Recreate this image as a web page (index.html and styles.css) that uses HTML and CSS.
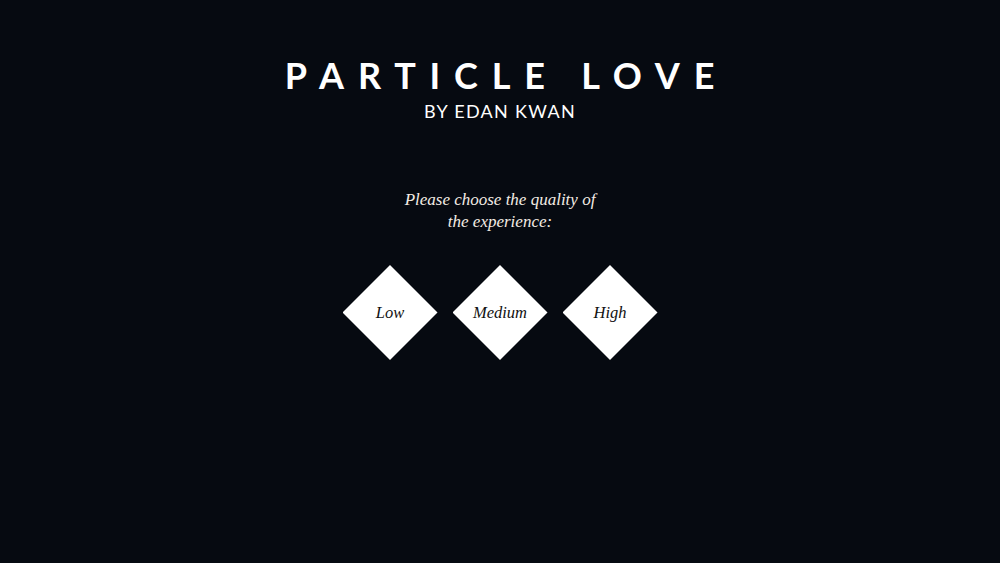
FILE: index.html
```html
<!DOCTYPE html>
<html lang="en">
<head>
    <meta charset="UTF-8">
    <title>Particle Love</title>
    <link rel="stylesheet" href="styles.css">
</head>
<body>
<div class="page">
    <div class="header">
        <h1 class="title">PARTICLE LOVE</h1>
        <div class="author">BY EDAN KWAN</div>
    </div>
    <p class="question">Please choose the quality of<br/>the experience:</p>
    <div class="choices">
        <div class="choice">Low</div>
        <div class="choice">Medium</div>
        <div class="choice">High</div>
    </div>
</div>
</body>
</html>
```

FILE: styles.css
```css
html,body{
    margin: 0;
    padding: 0;
    height: 100%;
    background: #060a11;
}
.page{
    display: flex;
    flex-direction: column;
    align-items: center;
    padding-top: 53px;
}
.header{
    display: flex;
    flex-direction: column;
    align-items: center;
}
.title{
    margin: 0;
    padding-left: 13px;
    font: bold 36px/44px "Lato", "Liberation Sans", sans-serif;
    letter-spacing: 13.8px;
    color: #fff;
}
.author{
    margin-top: 2px;
    font: 18px/24px "Lato", "Liberation Sans", sans-serif;
    letter-spacing: 1.3px;
    color: #fff;
}
.question{
    margin: 66px 0 0;
    text-align: center;
    font: italic 17px/22px "Liberation Serif", serif;
    color: #f3ece4;
}
.choices{
    display: flex;
    gap: 15px;
    margin-top: 32px;
}
.choice{
    width: 95px;
    height: 95px;
    display: flex;
    align-items: center;
    justify-content: center;
    background: #fff;
    clip-path: polygon(50% 0, 100% 50%, 50% 100%, 0 50%);
    font: italic 16.5px "Liberation Serif", serif;
    color: #111;
    cursor: pointer;
}
```
